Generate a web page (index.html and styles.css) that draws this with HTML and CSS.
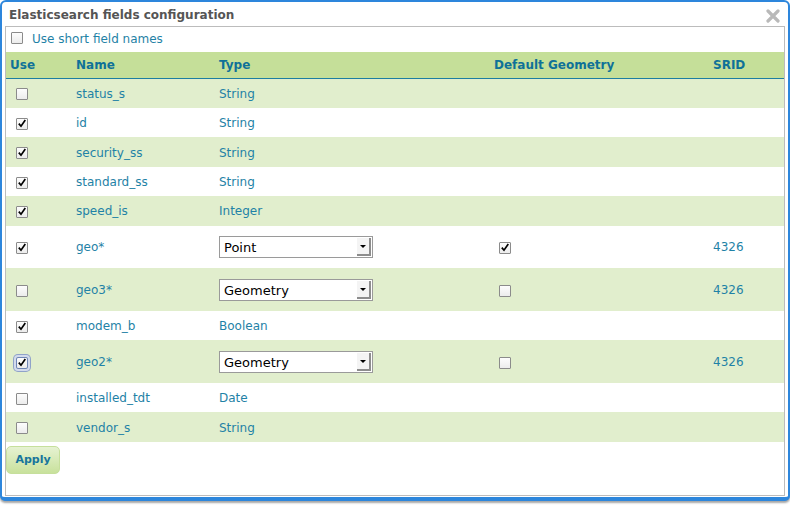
FILE: index.html
```html
<!DOCTYPE html>
<html>
<head>
<meta charset="utf-8">
<link rel="stylesheet" href="styles.css">
</head>
<body>
<div class="dialog">
  <div class="titlebar">
    <span class="title">Elasticsearch fields configuration</span>
    <svg class="close" width="14" height="14" viewBox="0 0 14 14"><path d="M2 2 L12 12 M12 2 L2 12" stroke="#b9b9b9" stroke-width="3.2" stroke-linecap="round"/></svg>
  </div>
  <div class="panel">
    <div class="shortnames"><span class="cb"></span><span class="lbl">Use short field names</span></div>
    <table class="fields">
      <colgroup><col class="c1"><col class="c2"><col class="c3"><col class="c4"><col class="c5"></colgroup>
      <thead>
        <tr><th>Use</th><th>Name</th><th>Type</th><th>Default Geometry</th><th>SRID</th></tr>
      </thead>
      <tbody>
        <tr class="alt"><td class="use"><span class="cb"></span></td><td>status_s</td><td>String</td><td></td><td></td></tr>
        <tr><td class="use"><span class="cb on"></span></td><td>id</td><td>String</td><td></td><td></td></tr>
        <tr class="alt"><td class="use"><span class="cb on"></span></td><td>security_ss</td><td>String</td><td></td><td></td></tr>
        <tr><td class="use"><span class="cb on"></span></td><td>standard_ss</td><td>String</td><td></td><td></td></tr>
        <tr class="alt"><td class="use"><span class="cb on"></span></td><td>speed_is</td><td>Integer</td><td></td><td></td></tr>
        <tr class="geo"><td class="use"><span class="cb on"></span></td><td>geo*</td><td><div class="select"><span class="val">Point</span><span class="arrow"></span></div></td><td class="def"><span class="cb on"></span></td><td>4326</td></tr>
        <tr class="alt geo"><td class="use"><span class="cb"></span></td><td>geo3*</td><td><div class="select"><span class="val">Geometry</span><span class="arrow"></span></div></td><td class="def"><span class="cb"></span></td><td>4326</td></tr>
        <tr><td class="use"><span class="cb on"></span></td><td>modem_b</td><td>Boolean</td><td></td><td></td></tr>
        <tr class="alt geo"><td class="use"><span class="cb on focus"></span></td><td>geo2*</td><td><div class="select"><span class="val">Geometry</span><span class="arrow"></span></div></td><td class="def"><span class="cb"></span></td><td>4326</td></tr>
        <tr><td class="use"><span class="cb"></span></td><td>installed_tdt</td><td>Date</td><td></td><td></td></tr>
        <tr class="alt"><td class="use"><span class="cb"></span></td><td>vendor_s</td><td>String</td><td></td><td></td></tr>
      </tbody>
    </table>
    <button class="apply">Apply</button>
  </div>
</div>
</body>
</html>
```
FILE: styles.css
```css
html, body {
  margin: 0;
  padding: 0;
  background: #ffffff;
}
body {
  width: 790px;
  height: 505px;
  overflow: hidden;
  font-family: "DejaVu Sans", Verdana, sans-serif;
  font-size: 12px;
  color: #1f82a6;
}
.dialog {
  box-sizing: border-box;
  width: 790px;
  height: 501px;
  border: 2px solid #2d86dc;
  border-bottom-width: 4px;
  border-radius: 6px 6px 5px 5px;
  background: #fff;
  display: flex;
  flex-direction: column;
  box-shadow: 0 2px 2px rgba(0,0,0,0.35);
}
.titlebar {
  height: 24px;
  display: flex;
  align-items: center;
  justify-content: space-between;
  padding: 0 8px 0 7px;
  flex: none;
}
.title {
  font-weight: bold;
  font-size: 12px;
  color: #555;
  padding-top: 2px;
}
.close {
  display: block;
  margin-top: 4px;
}
.panel {
  flex: 1;
  margin: 0 3px 1px 3px;
  border: 1px solid #bcbcbc;
  display: flex;
  flex-direction: column;
  align-items: flex-start;
}
.shortnames {
  height: 25px;
  display: flex;
  align-items: center;
  padding-left: 5px;
  gap: 9px;
}
.shortnames .cb { margin-top: -4px; }
.shortnames .lbl { margin-top: -1px; }
.fields {
  width: 100%;
  border-collapse: collapse;
  table-layout: fixed;
}
.c1 { width: 66px; }
.c2 { width: 143px; }
.c3 { width: 275px; }
.c4 { width: 219px; }
.c5 { width: auto; }
th {
  background: #c5df99;
  color: #0f7198;
  font-weight: bold;
  text-align: left;
  height: 26px;
  padding: 0 4px;
  border-bottom: 1px solid #1d7ea1;
  vertical-align: middle;
}
td {
  height: 29.45px;
  padding: 1px 4px 0 4px;
  vertical-align: middle;
  box-sizing: border-box;
}
tr.geo td { height: 42.6px; }
tr.alt td { background: #e1eecd; }
td.use { padding-left: 10px; }
td.def { padding-left: 9px; }
.cb {
  display: inline-block;
  box-sizing: border-box;
  width: 12px;
  height: 12px;
  border: 1px solid #8b8b8b;
  border-radius: 1px;
  background: linear-gradient(#fdfdfd, #ececec);
  vertical-align: middle;
  position: relative;
}
.cb.on::after {
  content: "";
  position: absolute;
  left: 1px;
  top: 0px;
  width: 8px;
  height: 9px;
  background: url("data:image/svg+xml;utf8,<svg xmlns='http://www.w3.org/2000/svg' width='8' height='9' viewBox='0 0 8 9'><path d='M0.8 4.6 L3 7.2 L7.3 1' fill='none' stroke='black' stroke-width='1.7'/></svg>") no-repeat;
}
.cb.focus {
  border-color: #6f86b5;
  box-shadow: 0 0 0 2px #d3dbec, 0 0 0 3px #8fa2c9;
  border-radius: 2px;
}
.select {
  box-sizing: border-box;
  width: 154px;
  height: 22px;
  border: 1px solid #9a9a9a;
  background: #fff;
  display: flex;
  align-items: center;
  justify-content: space-between;
  color: #000;
  font-size: 13px;
}
.select .val { padding-left: 4px; }
.select .arrow {
  box-sizing: border-box;
  width: 14px;
  height: 18px;
  margin-right: 1px;
  background: #f4f4f4;
  border-right: 2px solid #8d8d8d;
  border-bottom: 2px solid #8d8d8d;
  position: relative;
}
.select .arrow::after {
  content: "";
  position: absolute;
  left: 3px;
  top: 7px;
  border-left: 3px solid transparent;
  border-right: 3px solid transparent;
  border-top: 3px solid #000;
}
.apply {
  margin: 4px 0 0 0;
  width: 54px;
  height: 28px;
  border: 1px solid #c6df9c;
  border-radius: 5px;
  background: linear-gradient(#e6f2d2, #c8e19c);
  color: #17759c;
  font-family: "DejaVu Sans", Verdana, sans-serif;
  font-weight: bold;
  font-size: 11px;
  padding: 0;
  cursor: pointer;
}
```
